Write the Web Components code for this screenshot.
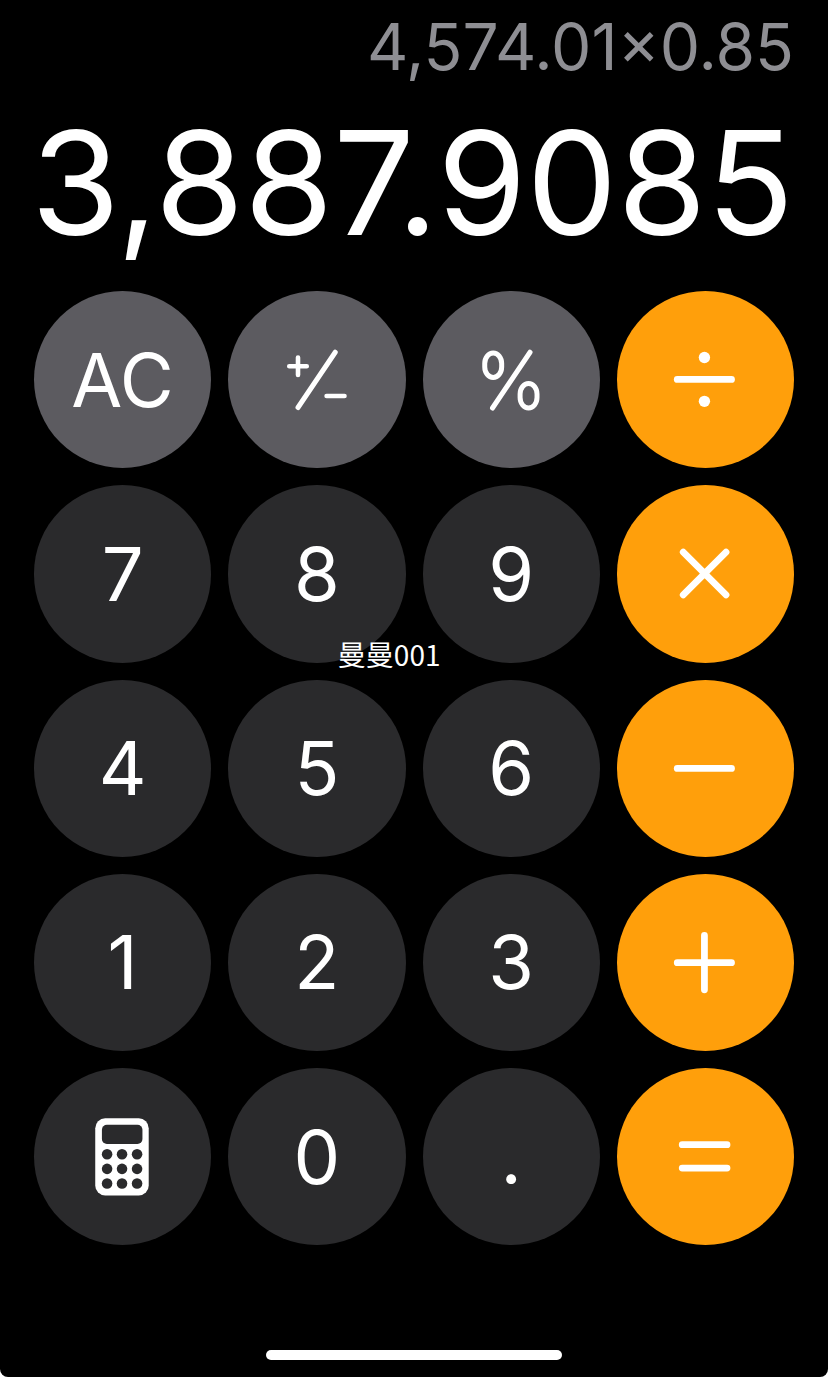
<!DOCTYPE html>
<html lang="zh-CN">
<head>
<meta charset="utf-8">
<meta name="viewport" content="width=device-width, initial-scale=1">
<title>Calculator</title>
<style>
  html {
    background: #fff;
  }
  body {
    margin: 0;
    font-family: Inter, 'Liberation Sans', sans-serif;
  }
</style>
</head>
<body>
<calc-app>
  <calc-display slot="display">
    <span slot="expression">4,574.01×0.85</span>
    <span slot="result">3,887.9085</span>
  </calc-display>

  <calc-key kind="function">AC</calc-key>
  <calc-key kind="function" icon="sign" label="Plus or minus"></calc-key>
  <calc-key kind="function" icon="percent" label="Percent"></calc-key>
  <calc-key kind="operator" icon="divide" label="Divide"></calc-key>

  <calc-key>7</calc-key>
  <calc-key>8</calc-key>
  <calc-key>9</calc-key>
  <calc-key kind="operator" icon="multiply" label="Multiply"></calc-key>

  <calc-key>4</calc-key>
  <calc-key>5</calc-key>
  <calc-key>6</calc-key>
  <calc-key kind="operator" icon="minus" label="Subtract"></calc-key>

  <calc-key>1</calc-key>
  <calc-key>2</calc-key>
  <calc-key>3</calc-key>
  <calc-key kind="operator" icon="plus" label="Add"></calc-key>

  <calc-key icon="calculator" label="Mode"></calc-key>
  <calc-key>0</calc-key>
  <calc-key>.</calc-key>
  <calc-key kind="operator" icon="equals" label="Equals"></calc-key>

  <span slot="watermark">曼曼001</span>
</calc-app>

<script>
'use strict';

// Every icon is drawn on the full face of a key, 178 units wide
const ICONS = {
  sign: `
    <g stroke-width="4.6">
      <path d="M61.5 75.5h17.6M70.3 66.7v17.6M99 105.5h18"/>
      <path stroke-width="5" d="M107.7 61.5 70.3 117"/>
    </g>`,
  percent: `
    <g stroke-width="5">
      <rect x="62" y="62.3" width="17" height="24.5" rx="8.5" ry="10.5"/>
      <rect x="97.5" y="93" width="17" height="24.5" rx="8.5" ry="10.5"/>
      <path d="M107.5 61.5 69.8 117.500"/>
    </g>`,
  divide: `
    <path d="M60.5 88.8h54.5"/>
    <circle class="solid" cx="87.8" cy="66.8" r="5.7"/>
    <circle class="solid" cx="87.8" cy="110.8" r="5.7"/>`,
  multiply: '<path d="M66.5 67.4l43 43M109.5 67.4l-43 43"/>',
  minus: '<path d="M60.5 88.8h54.5"/>',
  plus: '<path d="M60.5 89h54.5M87.8 61.7v54.6"/>',
  equals: '<path d="M65.5 77h45M65.5 100.500h45"/>',
  calculator: `
    <rect class="solid" x="61.5" y="50.5" width="53.7" height="77.5" rx="10"/>
    <g class="hole">
      <rect x="68.2" y="57" width="40.7" height="19.3" rx="5"/>
      <circle cx="73.4" cy="86.6" r="5.3"/>
      <circle cx="88.4" cy="86.6" r="5.3"/>
      <circle cx="103.5" cy="86.6" r="5.3"/>
      <circle cx="73.4" cy="101.3" r="5.3"/>
      <circle cx="88.4" cy="101.3" r="5.3"/>
      <circle cx="103.5" cy="101.3" r="5.3"/>
      <circle cx="73.4" cy="116" r="5.3"/>
      <circle cx="88.4" cy="116" r="5.3"/>
      <circle cx="103.5" cy="116" r="5.3"/>
    </g>`
};

class CalcApp extends HTMLElement {
  constructor() {
    super();
    const shadowRoot = this.attachShadow({mode: 'open'});
    shadowRoot.innerHTML = `<style>
      :host {
        position: relative;
        display: flex;
        flex-direction: column;
        box-sizing: border-box;
        min-height: 100vh;
        padding: 15px 34px 17px;
        border-radius: 0 0 8px 8px;
        background: #000;
        color: #fff;
      }
      #keys {
        display: grid;
        grid-template-columns: repeat(4, 1fr);
        gap: 17px;
        margin-top: 36px;
      }
      #home {
        width: 39%;
        height: 10px;
        margin: auto auto 0;
        border-radius: 5px;
        background: #fff;
      }
      /* lies over the keys */
      #watermark {
        position: absolute;
        top: 47.5%;
        left: 47%;
        transform: translate(-50%, -50%);
        font: 28px/32px 'Noto Sans CJK SC', sans-serif;
        white-space: nowrap;
        pointer-events: none;
      }
    </style>
    <slot name="display"></slot>
    <div id="keys"><slot></slot></div>
    <div id="home"></div>
    <div id="watermark"><slot name="watermark"></slot></div>`;
  }
}

class CalcDisplay extends HTMLElement {
  constructor() {
    super();
    const shadowRoot = this.attachShadow({mode: 'open'});
    shadowRoot.innerHTML = `<style>
      :host {
        display: flex;
        flex-direction: column;
        align-items: flex-end;
        gap: 32px;
        white-space: nowrap;
      }
      #expression {
        font-size: 64px;
        line-height: 64px;
        color: #8e8e93;
      }
      #result {
        font-size: 144px;
        line-height: 144px;
      }
    </style>
    <div id="expression"><slot name="expression"></slot></div>
    <div id="result"><slot name="result"></slot></div>`;
  }
}

class CalcKey extends HTMLElement {
  constructor() {
    super();
    const shadowRoot = this.attachShadow({mode: 'open'});
    shadowRoot.innerHTML = `<style>
      :host {
        --face: #2a2a2c;
        display: block;
        aspect-ratio: 1;
      }
      :host([kind="function"]) {
        --face: #5c5b60;
      }
      :host([kind="operator"]) {
        --face: #ff9f0b;
      }
      button {
        display: flex;
        align-items: center;
        justify-content: center;
        width: 100%;
        height: 100%;
        padding: 0;
        border: none;
        border-radius: 50%;
        background: var(--face);
        color: inherit;
        font: inherit;
        font-size: 74px;
        line-height: 80px;
        cursor: pointer;
      }
      button:active {
        filter: brightness(1.3);
      }
      svg {
        width: 100%;
        height: 100%;
        fill: none;
        stroke: currentColor;
        stroke-width: 6.8;
        stroke-linecap: round;
      }
      .solid {
        fill: currentColor;
        stroke: none;
      }
      .hole {
        fill: var(--face);
        stroke: none;
      }
    </style>
    <button type="button"><slot></slot></button>`;
  }

  connectedCallback() {
    const icon = ICONS[this.getAttribute('icon')];
    if (!icon) {
      return;
    }
    const button = this.shadowRoot.querySelector('button');
    button.setAttribute('aria-label', this.getAttribute('label'));
    button.innerHTML = `<svg viewBox="0 0 178 178" aria-hidden="true">${icon}</svg>`;
  }
}

customElements.define('calc-app', CalcApp);
customElements.define('calc-display', CalcDisplay);
customElements.define('calc-key', CalcKey);
</script>
</body>
</html>
